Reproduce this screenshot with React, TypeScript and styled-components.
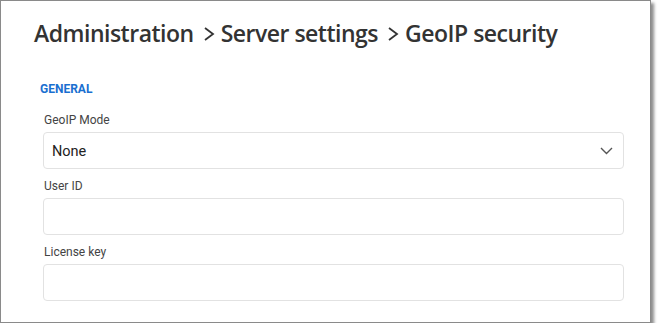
import React from 'react'
import styled, { createGlobalStyle } from 'styled-components'

const GlobalStyle = createGlobalStyle`
  html, body {
    margin: 0;
    padding: 0;
    background: #fff;
  }
`

const Frame = styled.div`
  box-sizing: border-box;
  width: 651px;
  height: 323px;
  border: 1px solid #8a8a8a;
  background: #fff;
  box-shadow: 3px 3px 3px rgba(0, 0, 0, 0.45);
  padding: 16px 27px 0 33px;
`

const Title = styled.h1`
  display: flex;
  align-items: center;
  margin: 0;
  font-family: 'Open Sans', 'Liberation Sans', sans-serif;
  font-size: 23px;
  line-height: 32px;
  font-weight: 600;
  letter-spacing: -0.5px;
  color: #333;
`

const Crumb = styled.span`
  white-space: nowrap;
`

const Sep = styled.svg`
  width: 12px;
  height: 14px;
  margin: 2px 6px 0 9px;
  flex: none;
`

const Form = styled.div`
  display: flex;
  flex-direction: column;
  margin-top: 33px;
  padding-left: 9px;
  font-family: Roboto, 'Liberation Sans', sans-serif;
`

const Section = styled.div`
  font-size: 12px;
  line-height: 14px;
  font-weight: 700;
  color: #1a6fd0;
  margin-left: -3px;
  margin-bottom: 16px;
`

const Fields = styled.div`
  display: flex;
  flex-direction: column;
  gap: 9px;
`

const Field = styled.div`
  display: flex;
  flex-direction: column;
  gap: 4px;
`

const Label = styled.label`
  font-size: 12px;
  line-height: 16px;
  color: #444;
  padding-left: 1px;
`

const Box = styled.div`
  box-sizing: border-box;
  display: flex;
  align-items: center;
  justify-content: space-between;
  width: 581px;
  height: 37px;
  border: 1px solid #e2e2e2;
  border-radius: 4px;
  background: #fff;
  padding: 2px 10px 0 8px;
  font-size: 14.5px;
  color: #222;
`

const Chevron = () => (
  <svg width="13" height="8" viewBox="0 0 13 8" style={{ marginTop: -2 }}>
    <path d="M1 1l5.5 5.5L12 1" fill="none" stroke="#555" strokeWidth="1.4" />
  </svg>
)

const Arrow = () => (
  <Sep viewBox="0 0 12 14">
    <path d="M2 1l8 6-8 6" fill="none" stroke="#333" strokeWidth="1.8" />
  </Sep>
)

export default function App() {
  return (
    <>
      <GlobalStyle />
      <Frame>
        <Title>
          <Crumb>Administration</Crumb>
          <Arrow />
          <Crumb>Server settings</Crumb>
          <Arrow />
          <Crumb>GeoIP security</Crumb>
        </Title>
        <Form>
          <Section>GENERAL</Section>
          <Fields>
            <Field>
              <Label>GeoIP Mode</Label>
              <Box>
                <span>None</span>
                <Chevron />
              </Box>
            </Field>
            <Field>
              <Label>User ID</Label>
              <Box />
            </Field>
            <Field>
              <Label>License key</Label>
              <Box />
            </Field>
          </Fields>
        </Form>
      </Frame>
    </>
  )
}
